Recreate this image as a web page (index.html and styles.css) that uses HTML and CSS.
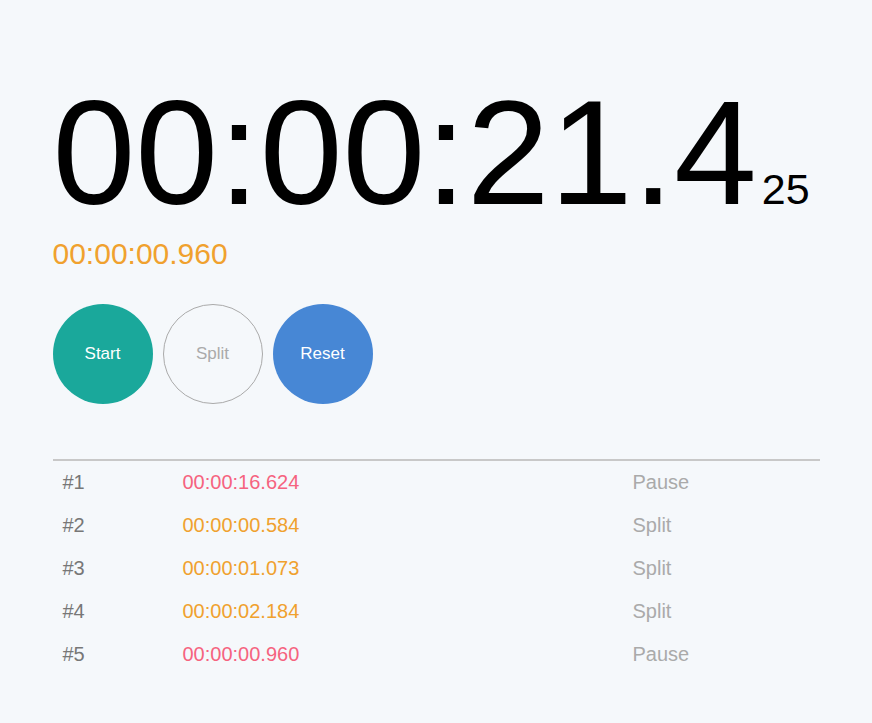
FILE: index.html
```html
<!DOCTYPE html>
<html>
<head>
<meta charset="utf-8">
<link rel="stylesheet" href="styles.css">
</head>
<body>
<div class="app">
  <div class="clock"><span class="main">00:00:21.4</span><span class="ms">25</span></div>
  <div class="current">00:00:00.960</div>
  <div class="buttons">
    <button class="btn start">Start</button>
    <button class="btn split">Split</button>
    <button class="btn reset">Reset</button>
  </div>
  <div class="laps">
    <div class="row"><span class="num">#1</span><span class="time pause">00:00:16.624</span><span class="kind">Pause</span></div>
    <div class="row"><span class="num">#2</span><span class="time splitc">00:00:00.584</span><span class="kind">Split</span></div>
    <div class="row"><span class="num">#3</span><span class="time splitc">00:00:01.073</span><span class="kind">Split</span></div>
    <div class="row"><span class="num">#4</span><span class="time splitc">00:00:02.184</span><span class="kind">Split</span></div>
    <div class="row"><span class="num">#5</span><span class="time pause">00:00:00.960</span><span class="kind">Pause</span></div>
  </div>
</div>
</body>
</html>
```

FILE: styles.css
```css
html, body {
  margin: 0;
  background: #f5f8fb;
  font-family: "Liberation Sans", Arial, sans-serif;
}
.app {
  width: 767px;
  margin: 0 auto;
  padding-top: 78px;
}
.clock {
  display: flex;
  align-items: baseline;
  line-height: 1;
  color: #000;
}
.main {
  font-size: 149px;
}
.ms {
  font-size: 43px;
  margin-left: 5px;
}
.current {
  font-size: 30px;
  line-height: 1;
  color: #f0a12e;
  margin-top: 12px;
}
.buttons {
  display: flex;
  gap: 10px;
  margin-top: 35px;
}
.btn {
  width: 100px;
  height: 100px;
  border-radius: 50%;
  border: 0;
  padding: 0;
  font-family: inherit;
  font-size: 17px;
  color: #fff;
}
.start { background: #1aa89b; }
.reset { background: #4787d5; }
.split {
  background: transparent;
  border: 1px solid #aaa;
  color: #aaa;
}
.laps {
  margin-top: 55px;
  border-top: 2px solid #c8c8c8;
}
.row {
  display: grid;
  grid-template-columns: 120px 450px 1fr;
  height: 43px;
  align-items: center;
  padding-left: 10px;
  font-size: 20px;
}
.num { color: #777; }
.kind { color: #aaa; }
.pause { color: #f6637f; }
.splitc { color: #f0a12e; }
```
